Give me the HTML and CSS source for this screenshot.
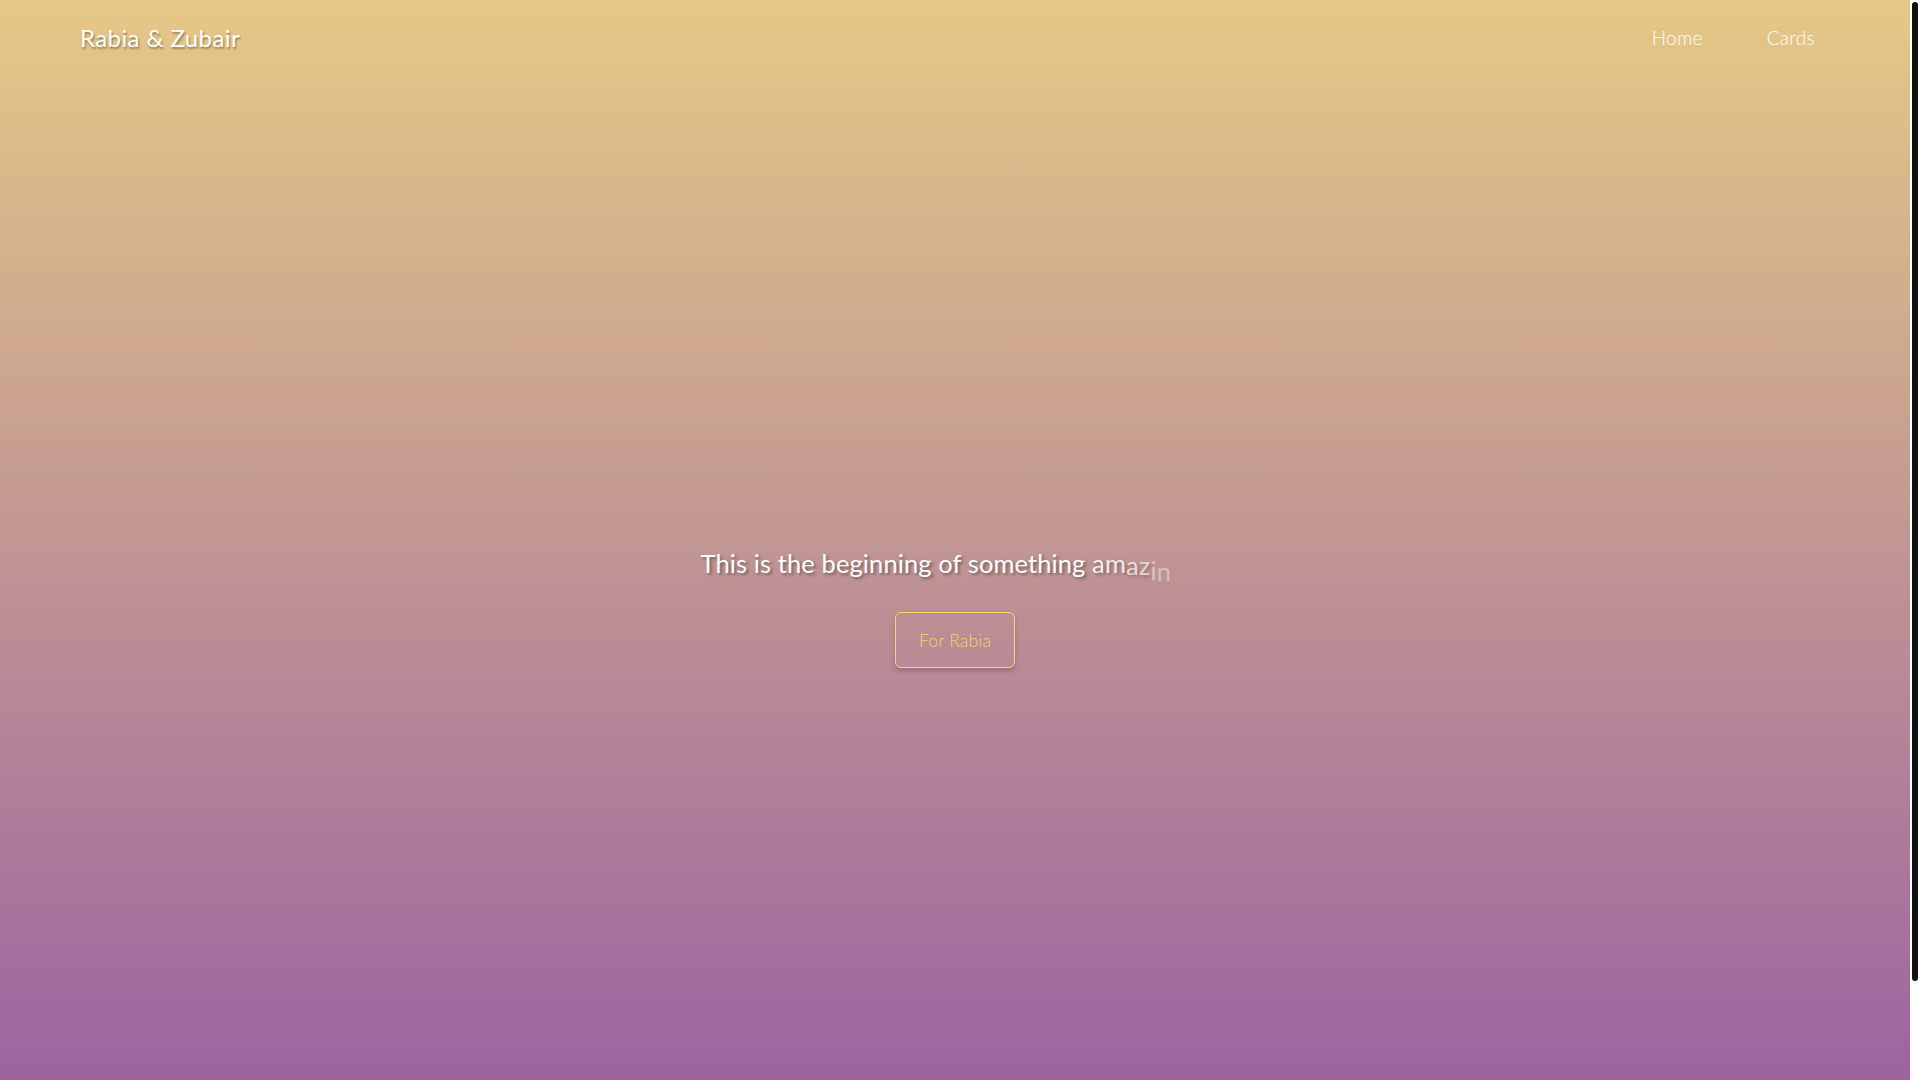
FILE: index.html
```html
<!DOCTYPE html>
<html lang="en">
<head>
<meta charset="utf-8">
<title>Rabia &amp; Zubair</title>
<link rel="stylesheet" href="styles.css">
</head>
<body>
<div class="viewport">
  <div class="page">
    <header class="navbar">
      <a class="brand" href="#">Rabia &amp; Zubair</a>
      <nav class="nav">
        <a class="nav-link" href="#">Home</a>
        <a class="nav-link" href="#">Cards</a>
      </nav>
    </header>
    <main class="hero">
      <h1 class="headline">This is the beginning of something <span class="l l1">a</span><span class="l l2">m</span><span class="l l3">a</span><span class="l l4">z</span><span class="l l5">i</span><span class="l l6">n</span><span class="l l7">g.</span></h1>
      <a class="btn" href="#">For Rabia</a>
    </main>
  </div>
  <div class="scrollbar">
    <div class="scrollbar-thumb"></div>
  </div>
</div>
</body>
</html>
```
FILE: styles.css
```css
html, body {
  margin: 0;
  padding: 0;
  overflow: hidden;
}
body {
  font-family: "Lato", "Open Sans", sans-serif;
  color: #ffffff;
  background: #ffffff;
}
.viewport {
  display: flex;
  height: 1080px;
}
.page {
  flex: 1;
  height: 1080px;
  background: linear-gradient(180deg, #e6c886 0%, #9c64a0 100%);
}
.scrollbar {
  width: 10px;
  background: #ffffff;
  padding: 2px 2px 0 2px;
  box-sizing: border-box;
}
.scrollbar-thumb {
  height: 979px;
  background: #111111;
  border-radius: 3px;
}
.navbar {
  display: flex;
  align-items: center;
  justify-content: space-between;
  height: 74px;
  padding: 0 95px 0 80px;
}
.brand {
  color: #ffffff;
  text-decoration: none;
  font-size: 24px;
  letter-spacing: 0.4px;
  text-shadow: 1px 2px 2px rgba(90, 70, 40, 0.55);
}
.nav {
  display: flex;
  gap: 64px;
}
.nav-link {
  color: #ffffff;
  text-decoration: none;
  font-size: 19px;
  font-weight: 300;
  letter-spacing: 0.3px;
}
.hero {
  display: flex;
  flex-direction: column;
  align-items: center;
  padding-top: 469px;
}
.headline {
  margin: 0;
  font-size: 25.5px;
  font-weight: 400;
  line-height: 40px;
  letter-spacing: 0.1px;
  text-shadow: 2px 2px 3px rgba(70, 50, 50, 0.55);
  white-space: nowrap;
}
.l {
  display: inline-block;
}
.l1 { opacity: 0.85; }
.l2 { opacity: 0.8; }
.l3 { opacity: 0.65; transform: translateY(2px); }
.l4 { opacity: 0.6; transform: translateY(2px); }
.l5 { opacity: 0.45; transform: translateY(7px); text-shadow: none; }
.l6 { opacity: 0.4; transform: translateY(8px); text-shadow: none; }
.l7 { opacity: 0; padding-right: 19px; }
.btn {
  margin-top: 29px;
  display: flex;
  align-items: center;
  justify-content: center;
  width: 118px;
  height: 54px;
  box-sizing: content-box;
  border: 1.5px solid #f6d96a;
  border-radius: 6px;
  color: #f3d466;
  text-decoration: none;
  font-size: 17.5px;
  font-weight: 300;
  letter-spacing: 0.2px;
  box-shadow: 0 3px 4px rgba(80, 50, 60, 0.3);
}
```
